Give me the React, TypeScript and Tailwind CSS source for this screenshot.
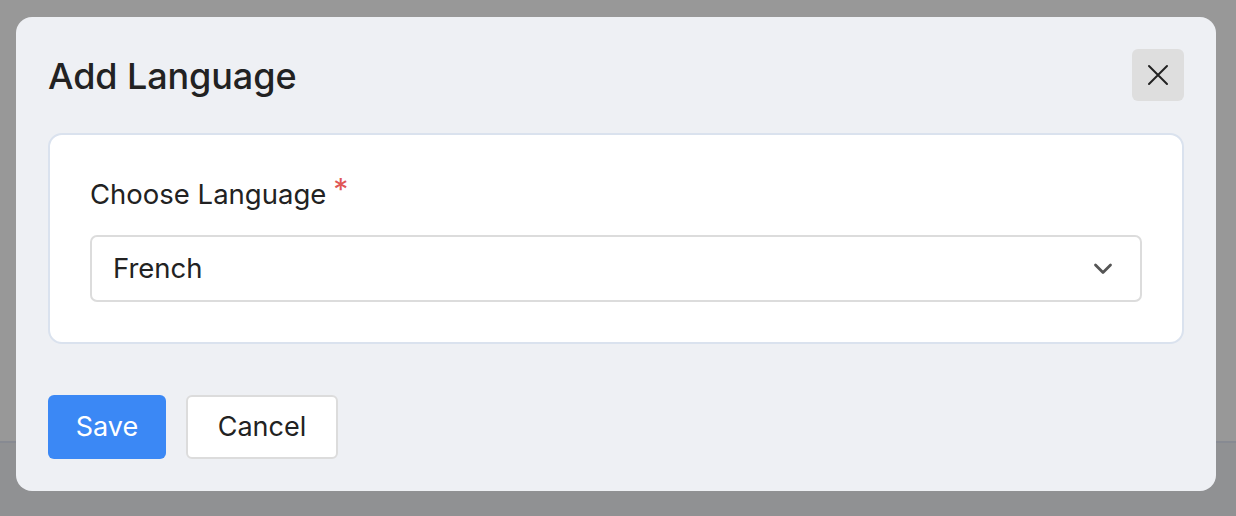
import React, { useState } from 'react';

const font = { fontFamily: 'Inter, "Noto Sans", sans-serif' };

export default function App() {
  const [lang] = useState('French');

  return (
    <div className="relative w-full h-[516px] overflow-hidden flex flex-col" style={font}>
      {/* page behind the overlay */}
      <div className="h-[441px] bg-[#989898]" />
      <div className="h-[2px] bg-[#878a92]" />
      <div className="flex-1 bg-[#909193]" />

      {/* dialog */}
      <div className="absolute left-[16px] top-[17px] w-[1200px] h-[474px] bg-[#eef0f4] rounded-[16px] px-[32px] pt-[32px] flex flex-col">
        <div className="flex items-center justify-between h-[52px]">
          <h1 className="text-[36px] font-medium text-[#222] tracking-[-0.1px] leading-none pt-[1px]">Add Language</h1>
          <button className="w-[52px] h-[52px] rounded-[6px] bg-[#dedede] flex items-center justify-center text-[#222]">
            <svg width="24" height="24" viewBox="0 0 24 24" fill="none" stroke="currentColor" strokeWidth="2" strokeLinecap="round">
              <path d="M3 3 L21 21 M21 3 L3 21" />
            </svg>
          </button>
        </div>

        <div className="mt-[32px] bg-white border-2 border-[#dae2ee] rounded-[14px] h-[211px] px-[40px] pt-[40px]">
          <label className="flex items-start text-[27.5px] text-[#222] leading-none h-[30px]">
            <span className="pt-[6px]">Choose Language</span>
            <span className="text-[#e05656] text-[30px] ml-[7px] -mt-[1px]">*</span>
          </label>
          <div className="mt-[30px] h-[67px] border-2 border-[#dcdcdc] rounded-[7px] flex items-center justify-between pl-[21px] pr-[27px]">
            <span className="text-[27.5px] text-[#222]">{lang}</span>
            <svg width="20" height="12" viewBox="0 0 20 12" fill="none" stroke="#555" strokeWidth="2.8" strokeLinecap="round" strokeLinejoin="round">
              <path d="M2.5 2 L10 9.5 L17.5 2" />
            </svg>
          </div>
        </div>

        <div className="mt-[51px] flex gap-[20px]">
          <button className="w-[118px] h-[64px] rounded-[6px] bg-[#3b88f5] text-white text-[27px]">Save</button>
          <button className="w-[152px] h-[64px] rounded-[6px] bg-white border-2 border-[#dcdcdc] text-[#222] text-[27px]">Cancel</button>
        </div>
      </div>
    </div>
  );
}
